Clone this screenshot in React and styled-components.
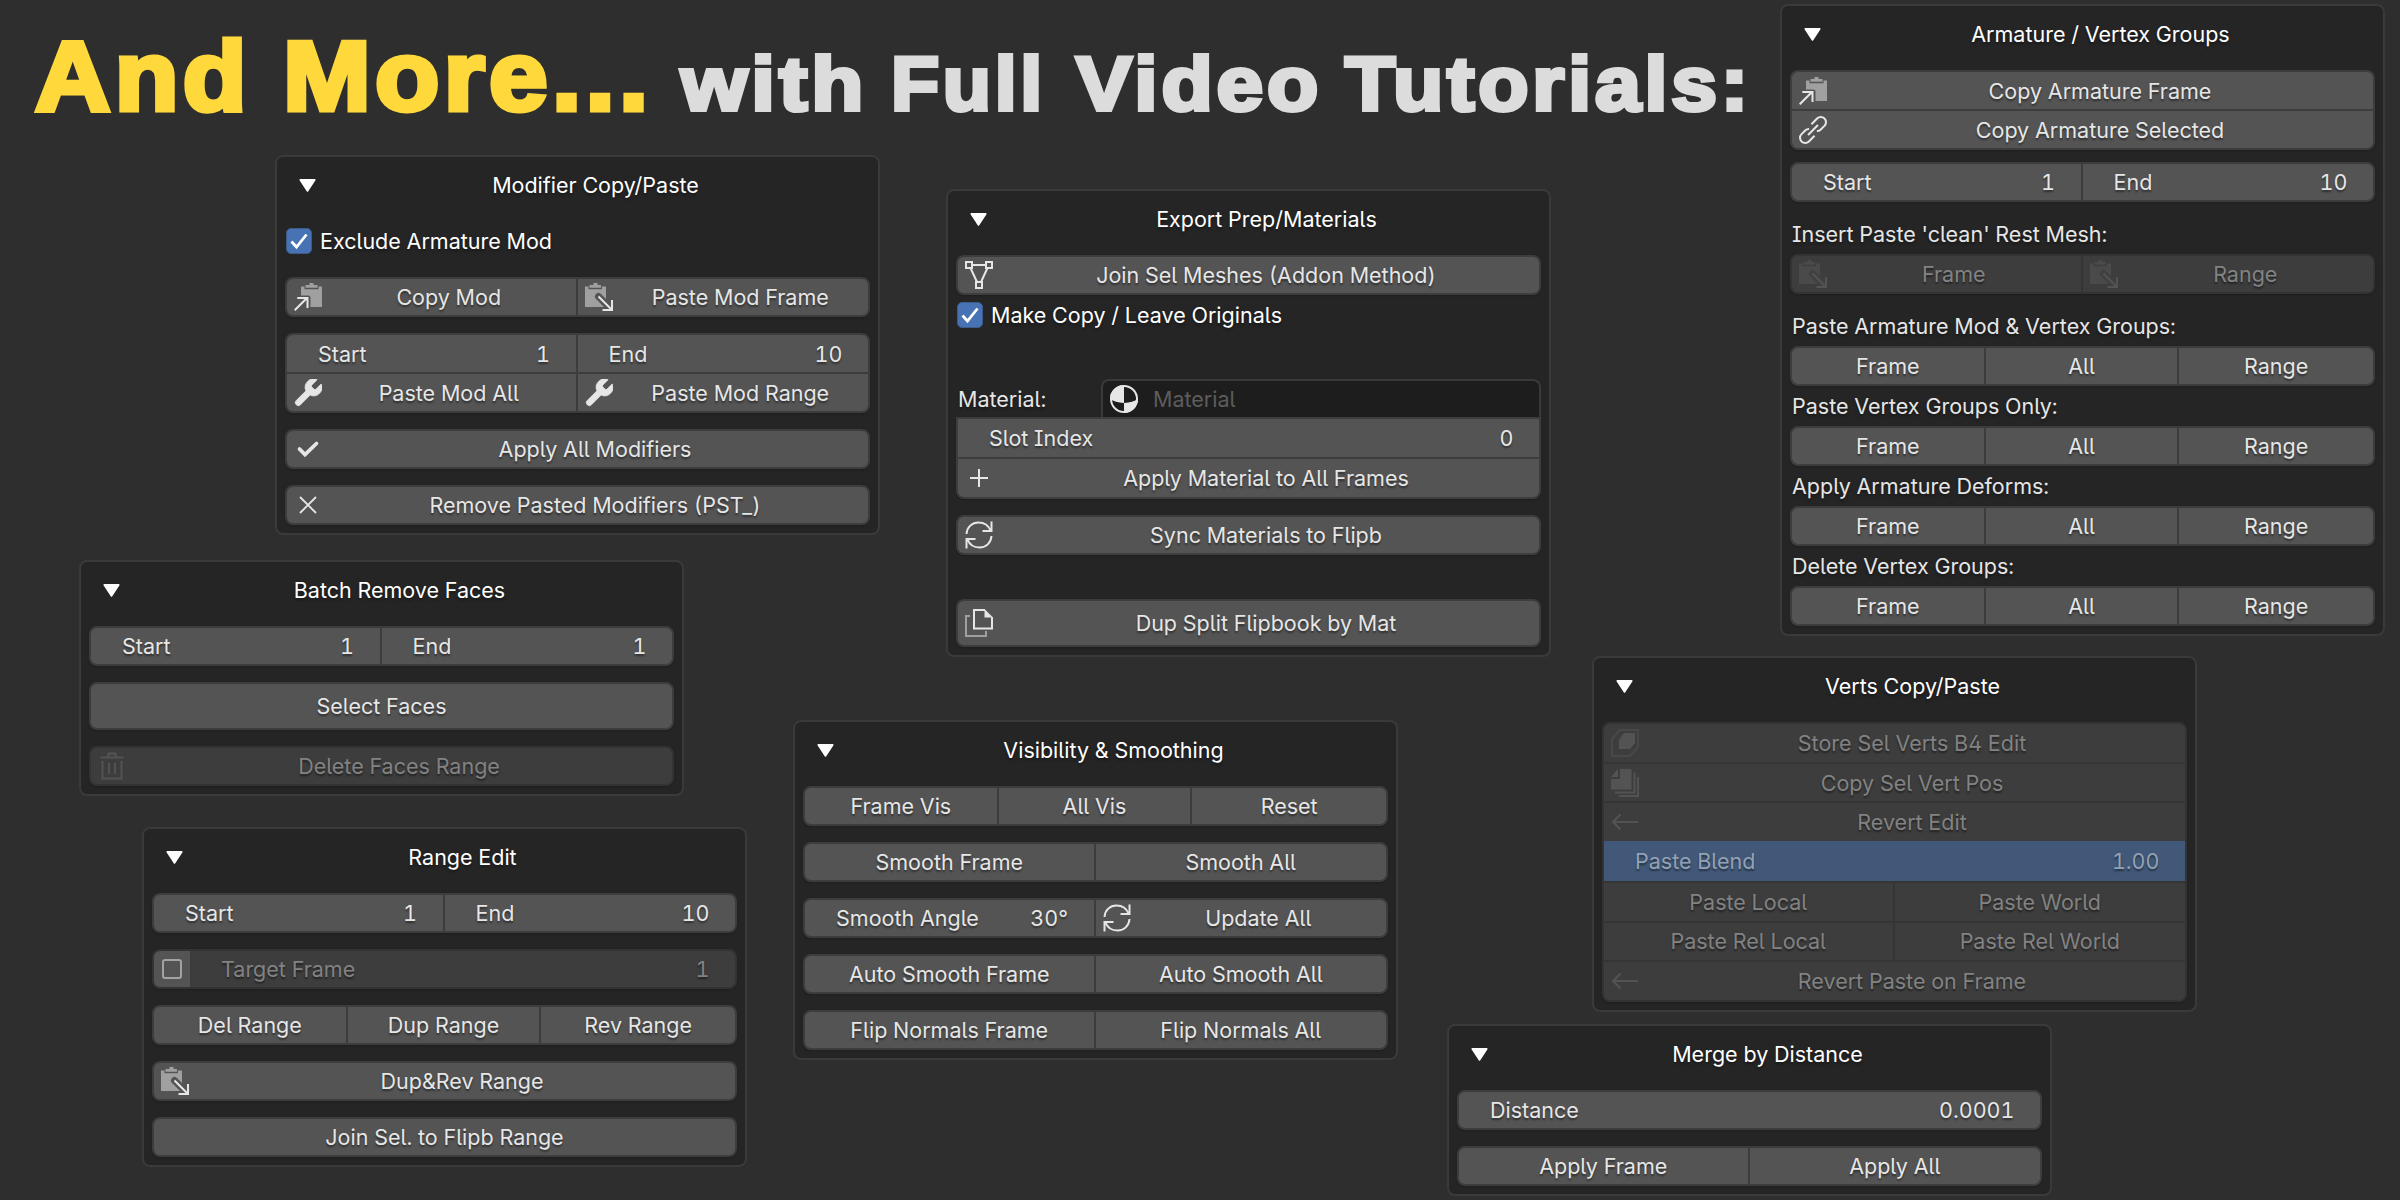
import styled, { createGlobalStyle } from "styled-components"

const GlobalStyle = createGlobalStyle`
    * {
        box-sizing: border-box;
    }

    body {
        margin: 0;
        background: #2e2e2e;
    }
`;

const SPage = styled.main`
    position: relative;
    width: 2400px;
    height: 1200px;
    overflow: hidden;
    background: #2e2e2e;
    color: #e6e6e6;
    font-family: Inter, "Liberation Sans", sans-serif;
    font-size: 21.5px;
    font-feature-settings: "cv05", "cv08", "cv02", "tnum";
`;

const SHeading = styled.h1`
    display: flex;
    align-items: baseline;
    margin: 0;
    padding: 20px 0 0 35px;
    font-family: "Liberation Sans", Arial, sans-serif;
    font-weight: 700;
    line-height: 1.15;
    white-space: pre;
`;

const SHeadingWord = styled.span`
    display: block;
    flex: none;
    width: ${props => props.$width}px;
    font-size: ${props => props.$accent ? 98 : 75.5}px;
    letter-spacing: ${props => props.$accent ? 4 : 3.5}px;
    color: ${props => props.$accent ? '#ffd93b' : '#dcdcdc'};
    -webkit-text-stroke: ${props => props.$accent ? '5px #ffd93b' : '4px #dcdcdc'};
    transform: scaleX(${props => props.$stretch});
    transform-origin: left;
`;

const SPanel = styled.section`
    position: absolute;
    left: ${props => props.$x}px;
    top: ${props => props.$y}px;
    display: flex;
    flex-direction: column;
    width: 605px;
    padding: 0 8px 8px;
    border: 2px solid #3a3a3a;
    border-radius: 8px;
    background: #252525;
`;

const SPanelHeader = styled.header`
    display: flex;
    align-items: center;
    height: 64px;
    padding: 0 0 8px 14px;
    color: #fff;
    text-shadow: 0 2px 3px rgba(0, 0, 0, 0.4);

    & svg {
        flex: none;
    }
`;

const SPanelTitle = styled.h2`
    flex: 1;
    margin: 0;
    padding-left: 5px;
    font-size: inherit;
    font-weight: 400;
    text-align: center;
`;

const SStack = styled.div`
    display: flex;
    flex-direction: column;
    gap: ${props => props.$gap ?? 16}px;
`;

const SGroup = styled.div`
    display: flex;
    flex-direction: column;
    height: ${props => props.$height ?? 40}px;
    border: 2px solid ${props => props.$disabled ? '#333' : '#3d3d3d'};
    border-radius: ${props => props.$joined ? '0 0 8px 8px' : '8px'};
    background: ${props => props.$disabled ? '#353535' : '#3d3d3d'};
    box-shadow: 0 1px 2px rgba(0, 0, 0, 0.2);
    overflow: hidden;
`;

const SRow = styled.div`
    display: grid;
    flex: 1;
    grid-auto-flow: column;
    grid-auto-columns: minmax(0, 1fr);
    grid-template-columns: ${props => props.$columns};

    &:not(:last-child) {
        margin-bottom: 2px;
    }
`;

const SCell = styled.div`
    display: flex;
    align-items: center;
    min-width: 0;
    padding-left: ${props => props.$icon ? 7 : 0}px;
    background: ${props => props.$disabled ? '#3d3d3d' : '#545454'};
    color: ${props => props.$disabled ? '#828282' : '#e6e6e6'};
    text-shadow: 0 2px 2px rgba(0, 0, 0, 0.45);
    white-space: nowrap;

    &:not(:last-child) {
        border-right: 2px solid ${props => props.$disabled ? '#353535' : '#3d3d3d'};
    }

    & svg {
        flex: none;
        opacity: ${props => props.$disabled ? 0.13 : 1};
    }
`;

const SCellText = styled.span`
    flex: 1;
    text-align: center;
`;

const SField = styled(SCell)`
    justify-content: space-between;
    padding: 0 25.5px 0 31px;
`;

const SSlider = styled(SField)`
    margin: -2px -1px 0;
    padding: 0 26.5px 0 32px;
    background: #415878;
    color: #93a1b5;
`;

const SToggle = styled.div`
    display: flex;
    align-items: center;
    justify-content: center;
    background: #545454;
`;

const SToggleBox = styled.span`
    width: 20px;
    height: 20px;
    margin-right: 1px;
    border: 2px solid #a2a2a2;
    border-radius: 3px;
`;

const SCheckbox = styled.label`
    display: flex;
    align-items: center;
    gap: 8px;
    height: 40px;
    padding-left: 1px;
    color: #fff;
    text-shadow: 0 2px 3px rgba(0, 0, 0, 0.4);
`;

const SCheckboxBox = styled.span`
    display: flex;
    align-items: center;
    justify-content: center;
    width: 26px;
    height: 26px;
    border: 1px solid #3d5c8c;
    border-radius: 5px;
    background: #4772b3;
`;

const SLabel = styled.div`
    display: flex;
    align-items: center;
    height: 40px;
    padding-left: 2px;
    text-shadow: 0 2px 3px rgba(0, 0, 0, 0.4);
`;

const SMaterialRow = styled.div`
    display: flex;
    height: 38px;
`;

const SMaterialLabel = styled(SLabel)`
    width: 145px;
`;

const SMaterialField = styled.div`
    display: flex;
    flex: 1;
    align-items: center;
    gap: 15px;
    padding-left: 7px;
    border: 2px solid #3a3a3a;
    border-bottom: none;
    border-radius: 8px 8px 0 0;
    background: #1d1d1d;
    color: #5c5c5c;
`;

const SSpacer = styled.div`
    height: 44px;
`;

const board = "#a0a0a0";
const back = "#545454";

function Svg({ children }) {
    return (
        <svg width="28" height="28" viewBox="0 0 28 28" fill="none" stroke="#e6e6e6" strokeWidth="2">
            {children}
        </svg>
    )
}

const icons = {
    copy: (
        <Svg>
            <path d="M7 3.500h3.500v2.800h14V3.500H28v20.500H16.500V14.500a2 2 0 0 0-2-2H7z" fill={board} stroke="none"/>
            <path d="M11.500 4.700V2h4V0h4v2h4v2.700z" fill={board} stroke="none"/>
            <path d="M.7 27.300 13.200 14.800M3.300 15h10.200v10"/>
        </Svg>
    ),
    paste: (
        <Svg>
            <path d="M0 3.500h3.500v2.800h13.500V3.500h4v20.500H0z" fill={board} stroke="none"/>
            <path d="M4.500 4.700V2h4V0h4v2h3.500v2.700z" fill={board} stroke="none"/>
            <path d="M13.500 13.500 26 26" stroke={back} strokeWidth="7" strokeLinecap="round"/>
            <path d="M13.500 13.500 26.500 26.500M27 17v10h-9.500"/>
        </Svg>
    ),
    wrench: (
        <svg width="28" height="28" viewBox="2 2 20 20" fill="#e6e6e6" stroke="#e6e6e6" strokeWidth=".6">
            <path d="M14.7 6.3a1 1 0 0 0 0 1.4l1.6 1.6a1 1 0 0 0 1.4 0l3.77-3.77a6 6 0 0 1-7.94 7.94l-6.91 6.91a2.12 2.12 0 0 1-3-3l6.91-6.91a6 6 0 0 1 7.94-7.94l-3.76 3.76z"/>
        </svg>
    ),
    check: (
        <Svg>
            <path d="m5.500 14 5.500 5.500L22.500 8.500" strokeWidth="3.800" strokeLinecap="round"/>
        </Svg>
    ),
    close: (
        <Svg>
            <path d="m6 6 16 16M22 6 6 22" strokeWidth="1.800"/>
        </Svg>
    ),
    plus: (
        <Svg>
            <path d="M14 5v18M5 14h18"/>
        </Svg>
    ),
    refresh: (
        <Svg>
            <path d="M1.500 13C2 6 7 1.500 13.500 1.500c5.500 0 10 3 12 8M26.500.5v9.500H17.500"/>
            <path d="M26.500 15c-.5 7-5.500 11.500-12 11.500-5.500 0-10-3-12-8M1.500 27.500V18H10.500"/>
        </Svg>
    ),
    mesh: (
        <Svg>
            <path d="M1 1h6v6H1zM21 1h6v6h-6zM11 21h6v6h-6zM7 4h14M5.500 7 12 21M22.500 7 16 21"/>
        </Svg>
    ),
    duplicate: (
        <Svg>
            <path d="M5 7H1v20h20v-5" stroke={board}/>
            <path d="M20 1H9v18.500h18V8"/>
            <path d="M19.500 0 28 8.500h-8.500z" fill="#e6e6e6" stroke="none"/>
        </Svg>
    ),
    link: (
        <Svg>
            <g transform="translate(14 14) rotate(-45)">
                <path d="M3 -5.200H11A5.200 5.200 0 0 1 11 5.200H5.500A5 5 0 0 1 2 3.500"/>
                <path d="M-3 5.200H-11A5.200 5.200 0 0 1 -11 -5.200H-5.500A5 5 0 0 1 -2 -3.500"/>
                <path d="M-7 0H7"/>
            </g>
        </Svg>
    ),
    trash: (
        <Svg>
            <path d="M2.500 5.500h23M10.500 5V1.500h7V5M4.500 9v17.500h19V9M11 11v11M17 11v11"/>
        </Svg>
    ),
    store: (
        <Svg>
            <path d="M9 1h18v17l-8 9H1V10z" opacity=".5"/>
            <path d="M13 4h11v10l-5 6H8v-9z" fill="#e6e6e6" stroke="none"/>
        </Svg>
    ),
    pages: (
        <Svg>
            <path d="M9 0h11.500v20.500H0V10h9z" fill="#e6e6e6" stroke="none"/>
            <path d="M7 0v8H0z" fill="#e6e6e6" stroke="none"/>
            <path d="M23.500 3.500v20H4M27 8v19H8"/>
        </Svg>
    ),
    back: (
        <Svg>
            <path d="M2 14h25M9.500 6.500 2 14l7.500 7.500"/>
        </Svg>
    ),
    material: (
        <Svg>
            <circle cx="14" cy="14" r="13"/>
            <path d="M14 0A14 14 0 0 0 0 14q5 3.500 14 4zM14 18q9-.5 14-4a14 14 0 0 1-14 14z" fill="#e6e6e6" stroke="none"/>
        </Svg>
    ),
};

function Button({ icon, disabled, children }) {
    return (
        <SCell $icon={!!icon} $disabled={disabled}>
            {icon && icons[icon]}
            <SCellText>{children}</SCellText>
        </SCell>
    )
}

function NumberField({ label, value, disabled }) {
    return (
        <SField $disabled={disabled}>
            <span>{label}</span>
            <span>{value}</span>
        </SField>
    )
}

function ButtonGroup({ items, disabled }) {
    return (
        <SGroup $disabled={disabled}>
            <SRow>
                {items.map(item => <Button key={item} disabled={disabled}>{item}</Button>)}
            </SRow>
        </SGroup>
    )
}

function StartEnd({ end }) {
    return (
        <SRow>
            <NumberField label="Start" value="1"/>
            <NumberField label="End" value={end}/>
        </SRow>
    )
}

function Checkbox({ children }) {
    return (
        <SCheckbox>
            <SCheckboxBox>
                <svg width="20" height="20" viewBox="0 0 20 20" fill="none" stroke="#fff" strokeWidth="2.800">
                    <path d="m2.500 10.500 5 5.500L17.500 3.500"/>
                </svg>
            </SCheckboxBox>
            {children}
        </SCheckbox>
    )
}

function Panel({ x, y, title, gap, children }) {
    return (
        <SPanel $x={x} $y={y}>
            <SPanelHeader>
                <svg width="17" height="13" viewBox="0 0 17 13" fill="#fff">
                    <path d="M1.200 0h14.600a.8.8 0 0 1 .7 1.200L9.300 12.200a1 1 0 0 1-1.600 0L.5 1.200A.8.8 0 0 1 1.200 0z"/>
                </svg>
                <SPanelTitle>{title}</SPanelTitle>
            </SPanelHeader>
            <SStack $gap={gap}>{children}</SStack>
        </SPanel>
    )
}

function LabeledButtons({ label }) {
    return (
        <div>
            <SLabel>{label}</SLabel>
            <ButtonGroup items={["Frame", "All", "Range"]}/>
        </div>
    )
}

export default function App() {
    return (
        <SPage>
            <GlobalStyle/>

            <SHeading>
                <SHeadingWord $accent $width={248} $stretch={1.065}>And </SHeadingWord>
                <SHeadingWord $accent $width={398} $stretch={1.075}>More... </SHeadingWord>
                <SHeadingWord $width={210} $stretch={1.130}>with </SHeadingWord>
                <SHeadingWord $width={185} $stretch={1.045}>Full </SHeadingWord>
                <SHeadingWord $width={269} $stretch={1.110}>Video </SHeadingWord>
                <SHeadingWord $width={410} $stretch={1.090}>Tutorials:</SHeadingWord>
            </SHeading>

            <Panel x={275} y={155} title="Modifier Copy/Paste">
                <Checkbox>Exclude Armature Mod</Checkbox>
                <SGroup>
                    <SRow>
                        <Button icon="copy">Copy Mod</Button>
                        <Button icon="paste">Paste Mod Frame</Button>
                    </SRow>
                </SGroup>
                <SGroup $height={80}>
                    <StartEnd end="10"/>
                    <SRow>
                        <Button icon="wrench">Paste Mod All</Button>
                        <Button icon="wrench">Paste Mod Range</Button>
                    </SRow>
                </SGroup>
                <SGroup><SRow><Button icon="check">Apply All Modifiers</Button></SRow></SGroup>
                <SGroup><SRow><Button icon="close">Remove Pasted Modifiers (PST_)</Button></SRow></SGroup>
            </Panel>

            <Panel x={79} y={560} title="Batch Remove Faces">
                <SGroup><StartEnd end="1"/></SGroup>
                <SGroup $height={48}><SRow><Button>Select Faces</Button></SRow></SGroup>
                <SGroup $disabled><SRow><Button icon="trash" disabled>Delete Faces Range</Button></SRow></SGroup>
            </Panel>

            <Panel x={142} y={827} title="Range Edit">
                <SGroup><StartEnd end="10"/></SGroup>
                <SGroup $disabled>
                    <SRow $columns="36px">
                        <SToggle><SToggleBox/></SToggle>
                        <NumberField label="Target Frame" value="1" disabled/>
                    </SRow>
                </SGroup>
                <ButtonGroup items={["Del Range", "Dup Range", "Rev Range"]}/>
                <SGroup><SRow><Button icon="paste">Dup&amp;Rev Range</Button></SRow></SGroup>
                <ButtonGroup items={["Join Sel. to Flipb Range"]}/>
            </Panel>

            <Panel x={946} y={189} title="Export Prep/Materials" gap={0}>
                <SGroup><SRow><Button icon="mesh">Join Sel Meshes (Addon Method)</Button></SRow></SGroup>
                <Checkbox>Make Copy / Leave Originals</Checkbox>
                <SSpacer/>
                <SMaterialRow>
                    <SMaterialLabel>Material:</SMaterialLabel>
                    <SMaterialField>
                        {icons.material}
                        <span>Material</span>
                    </SMaterialField>
                </SMaterialRow>
                <SStack>
                    <SGroup $height={82} $joined>
                        <SRow><NumberField label="Slot Index" value="0"/></SRow>
                        <SRow><Button icon="plus">Apply Material to All Frames</Button></SRow>
                    </SGroup>
                    <SGroup><SRow><Button icon="refresh">Sync Materials to Flipb</Button></SRow></SGroup>
                </SStack>
                <SSpacer/>
                <SGroup $height={48}><SRow><Button icon="duplicate">Dup Split Flipbook by Mat</Button></SRow></SGroup>
            </Panel>

            <Panel x={793} y={720} title="Visibility &amp; Smoothing">
                <ButtonGroup items={["Frame Vis", "All Vis", "Reset"]}/>
                <ButtonGroup items={["Smooth Frame", "Smooth All"]}/>
                <SGroup>
                    <SRow>
                        <NumberField label="Smooth Angle" value="30°"/>
                        <Button icon="refresh">Update All</Button>
                    </SRow>
                </SGroup>
                <ButtonGroup items={["Auto Smooth Frame", "Auto Smooth All"]}/>
                <ButtonGroup items={["Flip Normals Frame", "Flip Normals All"]}/>
            </Panel>

            <Panel x={1780} y={4} title="Armature / Vertex Groups" gap={12}>
                <SGroup $height={80}>
                    <SRow><Button icon="copy">Copy Armature Frame</Button></SRow>
                    <SRow><Button icon="link">Copy Armature Selected</Button></SRow>
                </SGroup>
                <SGroup><StartEnd end="10"/></SGroup>
                <div>
                    <SLabel>Insert Paste 'clean' Rest Mesh:</SLabel>
                    <SGroup $disabled>
                        <SRow>
                            <Button icon="paste" disabled>Frame</Button>
                            <Button icon="paste" disabled>Range</Button>
                        </SRow>
                    </SGroup>
                </div>
                <SStack $gap={0}>
                    <LabeledButtons label="Paste Armature Mod &amp; Vertex Groups:"/>
                    <LabeledButtons label="Paste Vertex Groups Only:"/>
                    <LabeledButtons label="Apply Armature Deforms:"/>
                    <LabeledButtons label="Delete Vertex Groups:"/>
                </SStack>
            </Panel>

            <Panel x={1592} y={656} title="Verts Copy/Paste">
                <SGroup $height={280} $disabled>
                    <SRow><Button icon="store" disabled>Store Sel Verts B4 Edit</Button></SRow>
                    <SRow><Button icon="pages" disabled>Copy Sel Vert Pos</Button></SRow>
                    <SRow><Button icon="back" disabled>Revert Edit</Button></SRow>
                    <SRow>
                        <SSlider>
                            <span>Paste Blend</span>
                            <span>1.00</span>
                        </SSlider>
                    </SRow>
                    <SRow>
                        <Button disabled>Paste Local</Button>
                        <Button disabled>Paste World</Button>
                    </SRow>
                    <SRow>
                        <Button disabled>Paste Rel Local</Button>
                        <Button disabled>Paste Rel World</Button>
                    </SRow>
                    <SRow><Button icon="back" disabled>Revert Paste on Frame</Button></SRow>
                </SGroup>
            </Panel>

            <Panel x={1447} y={1024} title="Merge by Distance">
                <SGroup><SRow><NumberField label="Distance" value="0.0001"/></SRow></SGroup>
                <ButtonGroup items={["Apply Frame", "Apply All"]}/>
            </Panel>
        </SPage>
    )
}
